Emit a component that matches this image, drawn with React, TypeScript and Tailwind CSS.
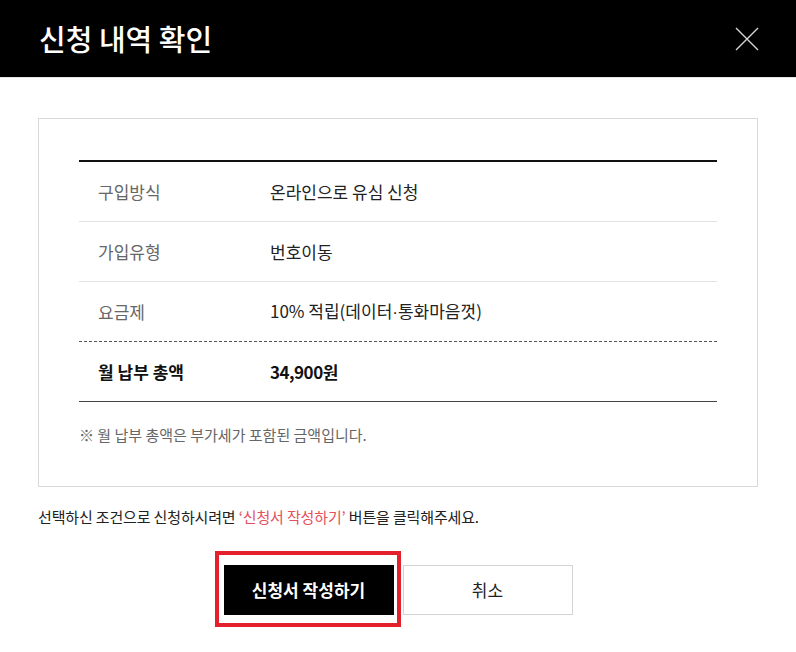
import React from "react";

const rows: { label: string; value: React.ReactNode }[] = [
  { label: "구입방식", value: "온라인으로 유심 신청" },
  { label: "가입유형", value: "번호이동" },
  {
    label: "요금제",
    value: (
      <>
        10% 적립(데이터<span className="font-['Liberation_Sans',sans-serif]">·</span>통화마음껏)
      </>
    ),
  },
];

export default function App() {
  return (
    <div className="h-[652px] w-[796px] bg-white font-['Noto_Sans_CJK_KR','Noto_Sans',sans-serif] text-[#222]">
      <header className="flex h-[78px] items-center justify-between border-b border-[#e5e5e5] bg-black pl-[39px] pr-[37px]">
        <h1 className="text-[29px] font-medium text-white">신청 내역 확인</h1>
        <button aria-label="닫기" className="flex h-[24px] w-[24px] items-center justify-center">
          <svg width="24" height="24" viewBox="0 0 24 24" fill="none">
            <path d="M1 1L23 23M23 1L1 23" stroke="#d6d6d6" strokeWidth="1.4" />
          </svg>
        </button>
      </header>

      <main className="px-[38px] pt-[40px]">
        <section className="border border-[#d9d9d9] px-[40px] pb-[40px] pt-[41px]">
          <div className="border-t-2 border-[#111]">
            {rows.map((row, index) => (
              <div
                className={
                  index === rows.length - 1
                    ? "flex h-[60px] items-center border-b border-dashed border-[#555] text-[17px]"
                    : "flex h-[60px] items-center border-b border-[#e2e2e2] text-[17px]"
                }
                key={row.label}
              >
                <div className="w-[191px] pl-[19px] text-[#666]">{row.label}</div>
                <div className="text-[#222]">{row.value}</div>
              </div>
            ))}
            <div className="flex h-[60px] items-center border-b border-[#444] text-[17px] font-bold">
              <div className="w-[191px] pl-[19px] text-[#111]">월 납부 총액</div>
              <div className="tracking-[-0.5px] text-[#111]">34,900원</div>
            </div>
          </div>
          <p className="mt-[22px] text-[15px] leading-[22px] text-[#666]">
            ※ 월 납부 총액은 부가세가 포함된 금액입니다.
          </p>
        </section>

        <p className="mt-[19px] text-[15px] leading-[22px] tracking-[-0.15px] text-[#222]">
          선택하신 조건으로 신청하시려면{" "}
          <span className="text-[#e4505c]">‘신청서 작성하기’</span> 버튼을 클릭해주세요.
        </p>

        <div className="mt-[37px] flex justify-center gap-[9px]">
          <div className="relative">
            <button className="h-[50px] w-[170px] bg-black text-[17px] font-bold text-white">
              신청서 작성하기
            </button>
            <div className="pointer-events-none absolute -bottom-[12px] -left-[9px] -right-[7px] -top-[14px] border-4 border-[#e3202b]" />
          </div>
          <button className="h-[50px] w-[170px] border border-[#d4d4d4] bg-white text-[17px] text-[#222]">
            취소
          </button>
        </div>
      </main>
    </div>
  );
}
